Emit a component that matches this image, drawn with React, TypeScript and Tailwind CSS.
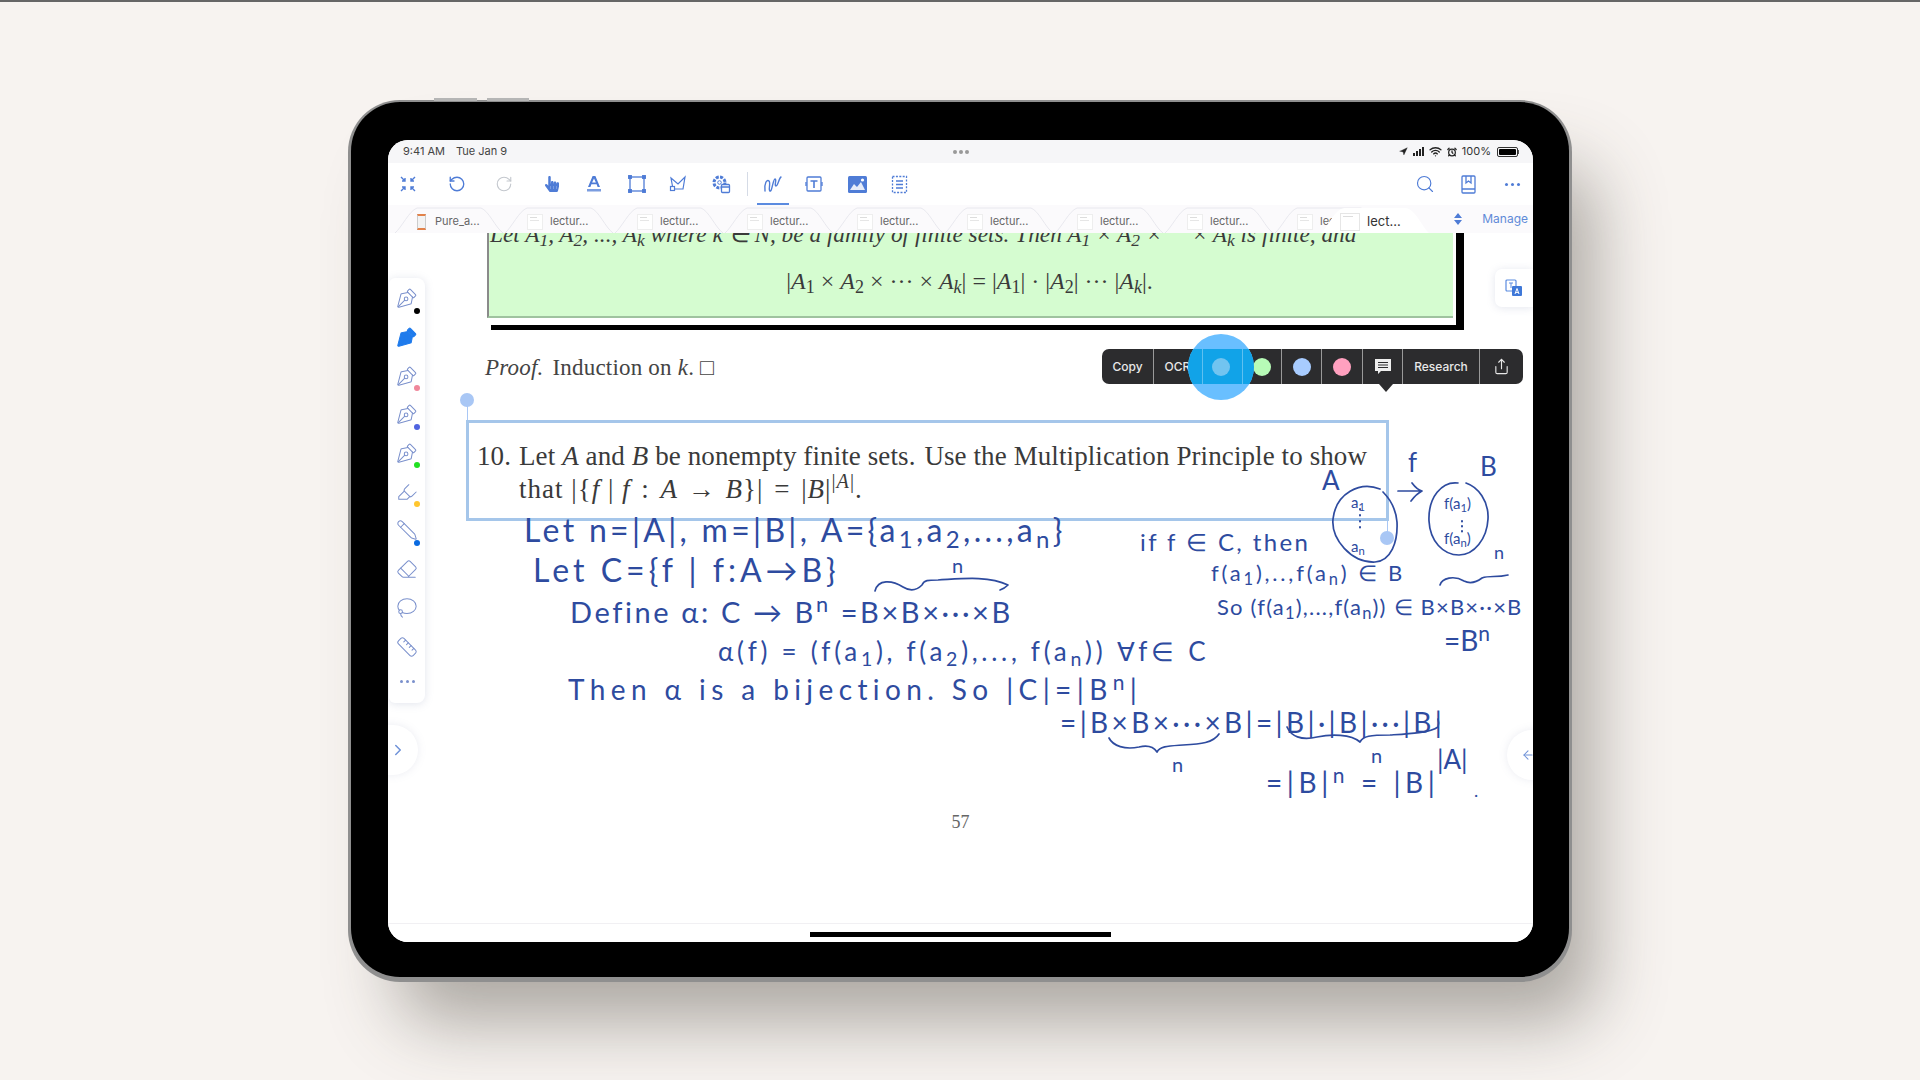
import React from "react";
import {
  RotateCcw,
  RotateCw,
  Search,
  PenTool,
  Highlighter,
  Pencil,
  Eraser,
  Lasso,
  Ruler,
  ChevronRight,
  ArrowLeft,
  Share,
  Navigation,
  Wifi,
  AlarmClock,
} from "lucide-react";
import { FaHandPointer } from "react-icons/fa";

const serif = "font-['Liberation_Serif',serif]";
const sans = "font-['Inter',sans-serif]";
const ink = "absolute whitespace-nowrap leading-none font-['Lato',sans-serif] text-[#2e4b9f]";

const Slot = ({ children, className = "" }: { children: React.ReactNode; className?: string }) => (
  <div className={`relative w-5 h-5 flex items-center justify-center text-[#4f7cd6] ${className}`}>{children}</div>
);

const StatusBar = () => (
  <div className={`relative h-[23px] bg-[#f6f6f8] flex items-center pl-[15px] pr-[14px] text-[11px] text-[#444] ${sans}`}>
    <span>9:41 AM</span>
    <span className="ml-[11px]">Tue Jan 9</span>
    <div className="absolute left-1/2 -translate-x-1/2 flex gap-[2px]">
      <span className="w-[4px] h-[4px] rounded-full bg-[#999]" />
      <span className="w-[4px] h-[4px] rounded-full bg-[#999]" />
      <span className="w-[4px] h-[4px] rounded-full bg-[#999]" />
    </div>
    <div className="ml-auto flex items-center text-[#333]">
      <Navigation size={9} fill="#222" strokeWidth={1} className="text-[#222]" />
      <div className="ml-[5px] flex items-end gap-[1px] h-[9px]">
        <span className="w-[2px] h-[3px] bg-[#222]" />
        <span className="w-[2px] h-[5px] bg-[#222]" />
        <span className="w-[2px] h-[7px] bg-[#222]" />
        <span className="w-[2px] h-[9px] bg-[#222]" />
      </div>
      <Wifi size={13} strokeWidth={2.5} className="ml-[5px] text-[#222]" />
      <AlarmClock size={10} strokeWidth={3} className="ml-[5px] text-[#222]" />
      <span className="ml-[5px]">100%</span>
      <div className="ml-[6px] w-[21px] h-[10px] border border-[#333] rounded-[2px] p-[1px]">
        <div className="w-full h-full bg-black rounded-[1px]" />
      </div>
      <span className="w-[1px] h-[4px] bg-[#555]" />
    </div>
  </div>
);

const Toolbar = () => (
  <div className="h-[42px] bg-white flex items-center pl-[10px] pr-[11px]">
    <Slot>
      <svg width="18" height="18" viewBox="0 0 18 18" fill="none" stroke="currentColor" strokeWidth="1.4">
        <path d="M2 2l4 4M6 3v3H3M16 2l-4 4M12 3v3h3M2 16l4-4M6 15v-3H3M16 16l-4-4M12 15v-3h3" />
      </svg>
    </Slot>
    <Slot className="ml-[29px]">
      <RotateCcw size={18} strokeWidth={1.8} />
    </Slot>
    <Slot className="ml-[27px] !text-[#c4c8ce]">
      <RotateCw size={18} strokeWidth={1.5} />
    </Slot>
    <Slot className="ml-[28px]">
      <FaHandPointer size={16} />
    </Slot>
    <Slot className="ml-[22px]">
      <svg width="16" height="20" viewBox="0 0 16 20" fill="currentColor">
        <path d="M6.6 2h2.8L14 13h-2.4l-1-2.7H5.4L4.4 13H2L6.6 2zm1.4 2.6L6.1 8.6h3.8L8 4.6z" />
        <rect x="1" y="15" width="14" height="2.5" opacity=".75" />
      </svg>
    </Slot>
    <Slot className="ml-[23px]">
      <svg width="18" height="18" viewBox="0 0 18 18" fill="none" stroke="currentColor" strokeWidth="1.3">
        <rect x="2" y="2" width="14" height="14" />
        <g fill="currentColor">
          <rect x="0.7" y="0.7" width="2.6" height="2.6" />
          <rect x="14.7" y="0.7" width="2.6" height="2.6" />
          <rect x="0.7" y="14.7" width="2.6" height="2.6" />
          <rect x="14.7" y="14.7" width="2.6" height="2.6" />
        </g>
      </svg>
    </Slot>
    <Slot className="ml-[21px]">
      <svg width="18" height="18" viewBox="0 0 18 18" fill="none" stroke="currentColor" strokeWidth="1.2">
        <path d="M2 3l7 6 7-7-2 12H4z" />
        <rect x="1.5" y="11.5" width="4" height="4" fill="#fff" />
      </svg>
    </Slot>
    <Slot className="ml-[23px]">
      <svg width="20" height="20" viewBox="0 0 20 20" fill="none" stroke="currentColor">
        <circle cx="8.5" cy="8.5" r="5.5" strokeWidth="3" strokeDasharray="3 1.3" />
        <circle cx="8.5" cy="8.5" r="1.8" strokeWidth="1" />
        <rect x="10.5" y="10.5" width="8" height="8" rx="1" fill="#fff" strokeWidth="1.3" />
        <path d="M10.5 13h8" strokeWidth="1.3" />
      </svg>
    </Slot>
    <span className="ml-[16px] w-px h-[24px] bg-[#d5dbe6]" />
    <Slot className="ml-[15px]">
      <svg width="20" height="20" viewBox="0 0 20 20" fill="none" stroke="currentColor" strokeWidth="1.4" strokeLinecap="round">
        <path d="M2 17C1 9 4 5 6 7s-1 9 1 10 3-12 5-12-1 7 1 7 3-8 5-9" />
      </svg>
      <span className="absolute left-[-6px] top-[29px] w-[32px] h-[2px] bg-[#5b8be0]" />
    </Slot>
    <Slot className="ml-[21px]">
      <svg width="18" height="18" viewBox="0 0 18 18" fill="none" stroke="currentColor" strokeWidth="1.3">
        <rect x="2" y="2" width="14" height="14" rx="1" />
        <path d="M5.5 6h7M9 6v7" strokeWidth="1.6" />
        <path d="M1 7v4M17 7v4" />
      </svg>
    </Slot>
    <Slot className="ml-[23px]">
      <svg width="19" height="17" viewBox="0 0 19 17">
        <rect width="19" height="17" rx="1.5" fill="currentColor" />
        <path d="M2 14l4-6 3 3 4-5 4 8z" fill="#fff" opacity=".85" />
        <circle cx="14.5" cy="4" r="1.6" fill="#fff" />
      </svg>
    </Slot>
    <Slot className="ml-[22px]">
      <svg width="17" height="19" viewBox="0 0 17 19" fill="none" stroke="currentColor" strokeWidth="1.3">
        <rect x="1.5" y="1.5" width="14" height="16" strokeDasharray="2 1.4" />
        <path d="M5 6h7M5 9.5h7M5 13h7" />
      </svg>
    </Slot>
    <Slot className="ml-auto">
      <Search size={20} strokeWidth={1.4} />
    </Slot>
    <Slot className="ml-[23px]">
      <svg width="15" height="19" viewBox="0 0 15 19" fill="none" stroke="currentColor" strokeWidth="1.3">
        <rect x="1" y="1" width="13" height="17" rx="1" />
        <path d="M1 14h13" />
        <path d="M5 1v7l2.5-2 2.5 2V1" />
      </svg>
    </Slot>
    <Slot className="ml-[24px]">
      <div className="flex gap-[3px]">
        <span className="w-[3px] h-[3px] rounded-full bg-[#4f7cd6]" />
        <span className="w-[3px] h-[3px] rounded-full bg-[#4f7cd6]" />
        <span className="w-[3px] h-[3px] rounded-full bg-[#4f7cd6]" />
      </div>
    </Slot>
  </div>
);

const TabEdge = () => (
  <svg className="absolute inset-0" width="110" height="28" viewBox="0 0 110 28" fill="none" stroke="#e8e8ee">
    <path d="M0 28C7 22 14 6 22 3h64c8 3 14 19 22 25" />
  </svg>
);

const Tab = ({ label = "lectur...", first = false }: { label?: string; first?: boolean }) => (
  <div className="relative w-[110px] shrink-0 h-full flex items-center pl-[22px] pt-[5px]">
    <TabEdge />
    {first ? (
      <div className="w-[9px] h-[16px] bg-[#f3f3f3] border-y-[2px] border-[#e2824a] border-x border-x-[#ccc]" />
    ) : (
      <div className="w-[16px] h-[16px] bg-white border border-[#eeeeee] flex flex-col gap-[2px] p-[2px]">
        <span className="w-[7px] h-px bg-[#ddd]" />
        <span className="w-[9px] h-px bg-[#e6e6e6]" />
      </div>
    )}
    <span className={`${first ? "ml-[9px]" : "ml-[7px]"} text-[11px] text-[#666] ${sans}`}>{label}</span>
  </div>
);

const Tabs = () => (
  <div className="relative h-[28px] bg-[#fbfafc] flex items-center pl-[7px] pr-[5px] overflow-hidden">
    <Tab first label="Pure_a..." />
    <Tab />
    <Tab />
    <Tab />
    <Tab />
    <Tab />
    <Tab />
    <Tab />
    <Tab />
    <div className="absolute left-[933px] top-[3px] w-[108px] h-[25px] flex items-center pl-[19px] pt-[3px]">
      <svg className="absolute inset-0" width="108" height="25" viewBox="0 0 108 25" fill="#fff">
        <path d="M0 25C6 20 12 5 20 1c2-1 3-1 5-1h58c2 0 3 0 5 1 8 4 14 19 20 24z" />
      </svg>
      <div className="relative w-[20px] h-[18px] border border-[#e6e6e6] flex flex-col gap-[2px] p-[2px]">
        <span className="w-[10px] h-px bg-[#ddd]" />
      </div>
      <span className={`relative ml-[7px] text-[13px] text-[#333] ${sans}`}>lect...</span>
    </div>
    <div className="ml-auto flex items-center">
      <svg width="10" height="14" viewBox="0 0 10 14" fill="#4f7cd6">
        <path d="M5 1l4 5H1zM5 13L1 8h8z" />
      </svg>
      <span className={`ml-[19px] text-[12px] text-[#5f8ad8] ${sans}`}>Manage</span>
    </div>
  </div>
);

const tools = [
  { Icon: PenTool, dot: "bg-black", rot: "-rotate-90" },
  { Icon: PenTool, dot: "", rot: "-rotate-90", on: true },
  { Icon: PenTool, dot: "bg-[#f0879a]", rot: "-rotate-90" },
  { Icon: PenTool, dot: "bg-[#5064e0]", rot: "-rotate-90" },
  { Icon: PenTool, dot: "bg-[#22e022]", rot: "-rotate-90" },
  { Icon: Highlighter, dot: "bg-[#ffc62e]", rot: "" },
  { Icon: Pencil, dot: "bg-[#0a6ae0]", rot: "-rotate-90" },
  { Icon: Eraser, dot: "", rot: "" },
  { Icon: Lasso, dot: "", rot: "" },
  { Icon: Ruler, dot: "", rot: "" },
];

const Palette = () => (
  <div className="absolute left-[1px] top-[45px] w-[36px] h-[425px] bg-white rounded-r-[8px] rounded-l-[6px] shadow-[0_1px_8px_rgba(120,130,170,0.22)] flex flex-col items-center pt-[1px]">
    {tools.map(({ Icon, dot, rot, on }, i) => (
      <div key={i} className="relative w-[24px] h-[38.7px] flex items-center justify-center">
        <Icon
          size={22}
          strokeWidth={1.1}
          className={`${rot} ${on ? "text-[#1f7bec]" : "text-[#7a90cc]"}`}
          fill={on ? "#1f7bec" : "none"}
        />
        {dot && <span className={`absolute right-[-1px] bottom-[4px] w-[6px] h-[6px] rounded-full ${dot}`} />}
      </div>
    ))}
    <div className="flex gap-[3px] mt-[14px]">
      <span className="w-[3px] h-[3px] rounded-full bg-[#7a90cc]" />
      <span className="w-[3px] h-[3px] rounded-full bg-[#7a90cc]" />
      <span className="w-[3px] h-[3px] rounded-full bg-[#7a90cc]" />
    </div>
  </div>
);

const Popup = () => (
  <>
    <div className={`absolute left-[714px] top-[116px] w-[421px] h-[35px] rounded-[7px] bg-[#2c2c2e] flex text-[12px] font-medium text-[#e8e8e8] ${sans}`}>
      <div className="w-[52px] flex items-center justify-center border-r border-[#9a9a9a]">Copy</div>
      <div className="w-[48px] flex items-center justify-center border-r border-[#9a9a9a]">OCR</div>
      <div className="w-[40px] border-r border-[#9a9a9a]" />
      <div className="w-[40px] flex items-center justify-center border-r border-[#9a9a9a]">
        <span className="w-[18px] h-[18px] rounded-full bg-[#b7fbb7]" />
      </div>
      <div className="w-[40px] flex items-center justify-center border-r border-[#9a9a9a]">
        <span className="w-[18px] h-[18px] rounded-full bg-[#a8ccff]" />
      </div>
      <div className="w-[41px] flex items-center justify-center border-r border-[#9a9a9a]">
        <span className="w-[18px] h-[18px] rounded-full bg-[#ffa0bf]" />
      </div>
      <div className="relative w-[40px] flex items-center justify-center border-r border-[#9a9a9a]">
        <svg width="18" height="18" viewBox="0 0 18 18">
          <path d="M1 1h16v12H7l-3 3v-3H1z" fill="#eee" />
          <path d="M4 4.5h10M4 7h10M4 9.5h10" stroke="#2c2c2e" strokeWidth="1" />
        </svg>
        <span className="absolute left-[16px] top-[35px] w-0 h-0 border-x-[7px] border-x-transparent border-t-[8px] border-t-[#2c2c2e]" />
      </div>
      <div className="w-[77px] flex items-center justify-center border-r border-[#9a9a9a]">Research</div>
      <div className="flex-1 flex items-center justify-center">
        <Share size={17} strokeWidth={1.6} />
      </div>
    </div>
    <div className="absolute left-[800px] top-[101px] w-[66px] h-[66px] rounded-full bg-[#69bfff] overflow-hidden">
      <div className="absolute left-0 right-0 top-[15px] h-[35px] bg-[#11a3e8]" />
      <span className="absolute left-[14px] top-[15px] w-px h-[35px] bg-[#5fc0f0]" />
      <span className="absolute left-[54px] top-[15px] w-px h-[35px] bg-[#5fc0f0]" />
      <span className="absolute left-[24px] top-[24px] w-[18px] h-[18px] rounded-full bg-[#72c4f0]" />
    </div>
  </>
);

const InkMarks = () => (
  <svg className="absolute inset-0 pointer-events-none" width="1145" height="709" viewBox="0 0 1145 709" fill="none" stroke="#2e4b9f" strokeWidth="1.7" strokeLinecap="round" strokeLinejoin="round">
    {/* brace over B x B x ... x B */}
    <path d="M487 358C490 346 504 347 515 354c8 5 14 3 19-2 2-5 6-5 16-5 20-1 50-5 70 5-3 3-5 4-8 5" />
    {/* set ovals */}
    <path d="M992 256C972 248 948 260 945 286c-2 20 18 44 42 43 16-1 23-20 22-40-1-12-6-22-14-30" />
    <path d="M1070 250c-16-2-30 14-29 38 1 20 14 34 30 34 15 0 28-16 29-36 1-18-10-32-22-36" />
    {/* arrow between the sets */}
    <path d="M1010 258h24c-4 2-8 6-11 10M1024 250c3 4 6 7 10 8" />
    {/* small brace, top right */}
    <path d="M1052 352c2-7 14-10 24-4 8 4 14 0 18-3 8-3 14 0 26-3" />
    {/* braces under the long line */}
    <path d="M721 505c4 8 16 12 30 9 8-2 14-1 18 5 3-6 12-6 26-7 18-1 30-2 36-11" />
    <path d="M899 494c4 9 14 14 30 10 14-3 34-3 43 5 3-6 10-7 30-7 16-1 40-2 48-8 1-4 1-5 0-8" />
    {/* dots in the set ovals */}
    <path d="M972 276v.5M972 282v.5M972 288v.5M972 294v.5M1074 288v.5M1074 293v.5M1074 298v.5" strokeWidth="2" />
  </svg>
);

const Ink = () => (
  <>
    <div className={`${ink} left-[136px] top-[281px] text-[32px] tracking-[3.3px]`}>Let n=|A|, m=|B|, A={"{"}a<sub>1</sub>,a<sub>2</sub>,...,a<sub>n</sub>{"}"}</div>
    <div className={`${ink} left-[145px] top-[321px] text-[32px] tracking-[4px]`}>Let C={"{"}f | f:A→B{"}"}</div>
    <div className={`${ink} left-[564px] top-[322px] text-[20px]`}>n</div>
    <div className={`${ink} left-[182px] top-[364px] text-[29px] tracking-[2.6px]`}>Define α: C → B<sup>n</sup> =B×B×···×B</div>
    <div className={`${ink} left-[330px] top-[405px] text-[26px] tracking-[3.7px]`}>α(f) = (f(a<sub>1</sub>), f(a<sub>2</sub>),..., f(a<sub>n</sub>)) ∀f∈ C</div>
    <div className={`${ink} left-[180px] top-[442px] text-[28px] tracking-[5.4px]`}>Then α is a bijection. So |C|=|B<sup>n</sup>|</div>
    <div className={`${ink} left-[672px] top-[475px] text-[28px] tracking-[3.4px]`}>=|B×B×···×B|=|B|·|B|···|B|</div>
    <div className={`${ink} left-[784px] top-[521px] text-[20px]`}>n</div>
    <div className={`${ink} left-[983px] top-[512px] text-[20px]`}>n</div>
    <div className={`${ink} left-[878px] top-[535px] text-[28px] tracking-[4.6px]`}>=|B|<sup>n</sup> = |B|</div>
    <div className={`${ink} left-[1049px] top-[513px] text-[26px]`}>|A|</div>
    <div className={`${ink} left-[1086px] top-[548px] text-[18px]`}>.</div>
    <div className={`${ink} left-[934px] top-[234px] text-[26px]`}>A</div>
    <div className={`${ink} left-[1020px] top-[216px] text-[26px]`}>f</div>
    <div className={`${ink} left-[1092px] top-[220px] text-[26px]`}>B</div>
    <div className={`${ink} left-[963px] top-[262px] text-[15px]`}>a<sub>1</sub></div>
    <div className={`${ink} left-[963px] top-[306px] text-[15px]`}>a<sub>n</sub></div>
    <div className={`${ink} left-[1056px] top-[263px] text-[15px]`}>f(a<sub>1</sub>)</div>
    <div className={`${ink} left-[1056px] top-[298px] text-[15px]`}>f(a<sub>n</sub>)</div>
    <div className={`${ink} left-[752px] top-[297px] text-[24px] tracking-[2.4px]`}>if f ∈ C, then</div>
    <div className={`${ink} left-[823px] top-[329px] text-[22px] tracking-[2.8px]`}>f(a<sub>1</sub>),..,f(a<sub>n</sub>) ∈ B</div>
    <div className={`${ink} left-[829px] top-[363px] text-[22px] tracking-[1.2px]`}>So (f(a<sub>1</sub>),...,f(a<sub>n</sub>)) ∈ B×B×··×B</div>
    <div className={`${ink} left-[1106px] top-[310px] text-[18px]`}>n</div>
    <div className={`${ink} left-[1056px] top-[393px] text-[28px]`}>=B<sup>n</sup></div>
  </>
);

const Page = () => (
  <div className="relative flex-1 bg-white overflow-hidden flex flex-col">
    <div className="ml-[103px] w-[973px] h-[97px] border-r-[8px] border-b-[5px] border-black pr-[3px] pb-[7px]">
      <div className={`-ml-[4px] h-full bg-[#d5fcd0] border-l-2 border-b-2 border-l-[#8a8a8a] border-b-[#9fc39f] overflow-hidden text-[#3a3a3a] ${serif}`}>
        <div className="-mt-[16px] ml-[1px] text-[23.3px] italic whitespace-nowrap">
          Let A<sub>1</sub>, A<sub>2</sub>, ..., A<sub>k</sub> where k ∈ N, be a family of finite sets. Then A<sub>1</sub> × A<sub>2</sub> ×<span className="ml-[30px]">× A<sub>k</sub> is finite, and</span>
        </div>
        <div className="mt-[11px] text-center text-[24px] whitespace-nowrap pr-[3px]">
          |<i>A</i><sub>1</sub> × <i>A</i><sub>2</sub> × ··· × <i>A<sub>k</sub></i>| = |<i>A</i><sub>1</sub>| · |<i>A</i><sub>2</sub>| ··· |<i>A<sub>k</sub></i>|.
        </div>
      </div>
    </div>
    <div className={`ml-[97px] mt-[25px] text-[23px] leading-[26px] tracking-[0.2px] text-[#444] ${serif}`}>
      <i>Proof.</i> <span className="ml-[3px]">Induction on <i>k</i>. □</span>
    </div>
    <div className={`ml-[89px] mt-[59px] flex text-[#3a3a3a] text-[27px] leading-[33px] tracking-[0.1px] ${serif}`}>
      <span className="w-[42px] shrink-0">10.</span>
      <div className="whitespace-nowrap">
        <div>Let <i>A</i> and <i>B</i> be nonempty finite sets. <span className="ml-[2px]">Use the Multiplication Principle to show</span></div>
        <div className="tracking-[1px]">that |{"{"}<i>f</i> | <i>f</i> <span className="mx-[3px]">:</span> <i>A</i> <span className="mx-[2px]">→</span> <i>B</i>{"}"}| <span className="mx-[3px]">=</span> |<i>B</i>|<sup>|<i>A</i>|</sup>.</div>
      </div>
    </div>
    <div className={`mt-[303px] text-center text-[18px] text-[#666] ${serif}`}>57</div>
    <div className="mt-auto h-[19px] border-t border-[#f1f0f3]" />

    <div className="absolute left-[78px] top-[187px] w-[923px] h-[101px] border-[3px] border-[#a5c6ea]" />
    <span className="absolute left-[79px] top-[167px] w-px h-[20px] bg-[#a9c7f5]" />
    <span className="absolute left-[72px] top-[160px] w-[14px] h-[14px] rounded-full bg-[#a9c7f5]" />
    <span className="absolute left-[999px] top-[288px] w-[1px] h-[17px] bg-[#a9c7f5]" />
    <span className="absolute left-[992px] top-[298px] w-[14px] h-[14px] rounded-full bg-[#a9c7f5]" />

    <Ink />
    <InkMarks />
    <Palette />
    <Popup />

    <div className="absolute right-0 top-[36px] w-[38px] h-[38px] bg-white rounded-l-[7px] shadow-[0_1px_8px_rgba(120,130,170,0.2)] flex items-center justify-center">
      <svg width="18" height="18" viewBox="0 0 18 18" fill="none">
        <rect x="1" y="1" width="10" height="11" rx="1" stroke="#5b8be0" strokeWidth="1.2" />
        <path d="M4 4h4M6 4v5" stroke="#5b8be0" strokeWidth="1" />
        <rect x="7" y="7" width="10" height="10" rx="1" fill="#3f78d8" />
        <path d="M10 15l2-5.5 2 5.5M10.8 13.4h2.4" stroke="#fff" strokeWidth="1" />
      </svg>
    </div>
    <div className="absolute -left-[26px] top-[492px] w-[56px] h-[50px] rounded-full bg-white shadow-[0_0_8px_rgba(120,130,170,0.15)] flex items-center justify-end pr-[11px]">
      <ChevronRight size={18} strokeWidth={2} className="text-[#6f92d8]" />
    </div>
    <div className="absolute -right-[30px] top-[497px] w-[56px] h-[50px] rounded-full bg-white shadow-[0_0_8px_rgba(120,130,170,0.15)] flex items-center pl-[14px]">
      <ArrowLeft size={14} strokeWidth={1.8} className="text-[#6f92d8]" />
    </div>
    <div className="absolute left-[422px] bottom-[5px] w-[301px] h-[5px] bg-black" />
  </div>
);

export default function App() {
  return (
    <div className="h-[1080px] overflow-hidden bg-[#f7f3f0] border-t-2 border-[#666] flex justify-center pt-[98px]">
      <div className="relative w-[1224px] h-[882px] rounded-[52px] bg-[#8f8f8f] pt-[2px] px-[3px] pb-[5px] shadow-[36px_54px_70px_-14px_rgba(70,65,55,0.42)]">
        <span className="absolute left-[86px] -top-[2px] w-[43px] h-[3px] bg-[#b5b5b5]" />
        <span className="absolute left-[139px] -top-[2px] w-[42px] h-[3px] bg-[#b5b5b5]" />
        <div className="h-full rounded-[49px] bg-black pl-[37px] pt-[38px]">
          <div className="w-[1145px] h-[802px] rounded-[20px] overflow-hidden bg-white flex flex-col">
            <StatusBar />
            <Toolbar />
            <Tabs />
            <Page />
          </div>
        </div>
      </div>
    </div>
  );
}
